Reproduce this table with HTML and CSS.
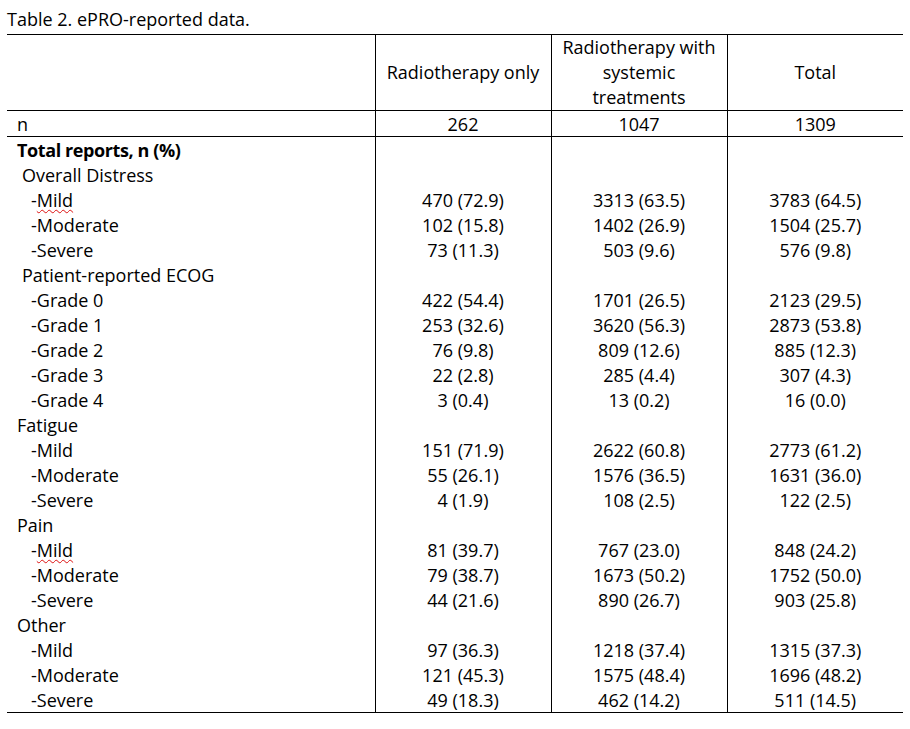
FILE: index.html
```html
<!DOCTYPE html>
<html>
<head>
<meta charset="utf-8">
<link rel="stylesheet" href="styles.css">
</head>
<body>
<div class="caption">Table 2. ePRO-reported data.</div>
<table class="data">
  <colgroup>
    <col class="c-label"><col class="c-num"><col class="c-num"><col class="c-num">
  </colgroup>
  <thead>
    <tr class="head">
      <th></th>
      <th>Radiotherapy only</th>
      <th>Radiotherapy with<br>systemic<br>treatments</th>
      <th>Total</th>
    </tr>
  </thead>
  <tbody>
    <tr class="nrow"><td class="lab">n</td><td>262</td><td>1047</td><td>1309</td></tr>
    <tr><td class="lab bold">Total reports, n (%)</td><td></td><td></td><td></td></tr>
    <tr><td class="lab sub">Overall Distress</td><td></td><td></td><td></td></tr>
    <tr><td class="lab item">-<span class="spell">Mild</span></td><td>470 (72.9)</td><td>3313 (63.5)</td><td>3783 (64.5)</td></tr>
    <tr><td class="lab item">-Moderate</td><td>102 (15.8)</td><td>1402 (26.9)</td><td>1504 (25.7)</td></tr>
    <tr><td class="lab item">-Severe</td><td>73 (11.3)</td><td>503 (9.6)</td><td>576 (9.8)</td></tr>
    <tr><td class="lab sub">Patient-reported ECOG</td><td></td><td></td><td></td></tr>
    <tr><td class="lab item">-Grade 0</td><td>422 (54.4)</td><td>1701 (26.5)</td><td>2123 (29.5)</td></tr>
    <tr><td class="lab item">-Grade 1</td><td>253 (32.6)</td><td>3620 (56.3)</td><td>2873 (53.8)</td></tr>
    <tr><td class="lab item">-Grade 2</td><td>76 (9.8)</td><td>809 (12.6)</td><td>885 (12.3)</td></tr>
    <tr><td class="lab item">-Grade 3</td><td>22 (2.8)</td><td>285 (4.4)</td><td>307 (4.3)</td></tr>
    <tr><td class="lab item">-Grade 4</td><td>3 (0.4)</td><td>13 (0.2)</td><td>16 (0.0)</td></tr>
    <tr><td class="lab">Fatigue</td><td></td><td></td><td></td></tr>
    <tr><td class="lab item">-Mild</td><td>151 (71.9)</td><td>2622 (60.8)</td><td>2773 (61.2)</td></tr>
    <tr><td class="lab item">-Moderate</td><td>55 (26.1)</td><td>1576 (36.5)</td><td>1631 (36.0)</td></tr>
    <tr><td class="lab item">-Severe</td><td>4 (1.9)</td><td>108 (2.5)</td><td>122 (2.5)</td></tr>
    <tr><td class="lab">Pain</td><td></td><td></td><td></td></tr>
    <tr><td class="lab item">-<span class="spell">Mild</span></td><td>81 (39.7)</td><td>767 (23.0)</td><td>848 (24.2)</td></tr>
    <tr><td class="lab item">-Moderate</td><td>79 (38.7)</td><td>1673 (50.2)</td><td>1752 (50.0)</td></tr>
    <tr><td class="lab item">-Severe</td><td>44 (21.6)</td><td>890 (26.7)</td><td>903 (25.8)</td></tr>
    <tr><td class="lab">Other</td><td></td><td></td><td></td></tr>
    <tr><td class="lab item">-Mild</td><td>97 (36.3)</td><td>1218 (37.4)</td><td>1315 (37.3)</td></tr>
    <tr><td class="lab item">-Moderate</td><td>121 (45.3)</td><td>1575 (48.4)</td><td>1696 (48.2)</td></tr>
    <tr class="last"><td class="lab item">-Severe</td><td>49 (18.3)</td><td>462 (14.2)</td><td>511 (14.5)</td></tr>
  </tbody>
</table>
</body>
</html>
```

FILE: styles.css
```css
html, body {
  margin: 0;
  padding: 0;
  background: #ffffff;
}
body {
  font-family: "Open Sans", "Lato", "Liberation Sans", sans-serif;
  font-size: 18px;
  color: #000000;
}
.caption {
  padding: 7px 0 0 7px;
  height: 34px;
  line-height: 25px;
  box-sizing: border-box;
}
.data {
  margin-left: 7px;
  width: 896px;
  border-collapse: collapse;
  table-layout: fixed;
}
.c-label { width: 368px; }
.c-num { width: 176px; }
.data th,
.data td {
  padding: 0;
  text-align: center;
  font-weight: normal;
  border-left: 1px solid #000;
  white-space: nowrap;
}
.data th:first-child,
.data td:first-child {
  border-left: none;
}
.head th {
  border-top: 1px solid #000;
  border-bottom: 1px solid #000;
  height: 75px;
  line-height: 25px;
  vertical-align: middle;
}
.data tbody tr {
  height: 25px;
}
.data tbody td {
  padding-top: 2px;
  line-height: 23px;
  vertical-align: top;
}
.nrow td {
  border-bottom: 1px solid #000;
}
.last td {
  border-bottom: 1px solid #000;
}
.data td.lab {
  text-align: left;
  padding-left: 10px;
}
.data td.bold {
  font-weight: bold;
  letter-spacing: -0.4px;
}
.data td.sub {
  padding-left: 15px;
}
.data td.item {
  padding-left: 24px;
}
.spell {
  text-decoration: underline wavy #d11;
  text-decoration-thickness: 1px;
  text-underline-offset: 2px;
}
```
